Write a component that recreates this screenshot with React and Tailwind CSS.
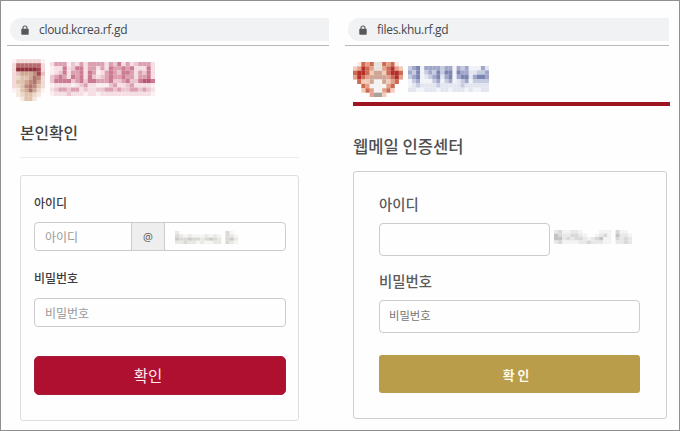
import React from "react";

const FONT = "font-['Noto_Sans_CJK_KR',sans-serif]";

const CREST = {
  colors: { a: "#fcf2f1", b: "#f3d9d9", c: "#e6bfc0", d: "#b96a6e", e: "#92303a", f: "#a34650", g: "#ecd8c9", h: "#dfc2ac", i: "#d0a891", j: "#c08a7a", k: "#b0736c", l: "#f6e8df" },
  rows: ["abbbbbba", "bddddddb", "beeeeefb", "bciiijfc", "bghhikjb", "bhhijkib", "bghjkjhb", "alhikiga", ".lghhgl.", "..lhhl.."],
};

const CREST_TEXT = {
  colors: { a: "#fbeff2", b: "#f5dfe5", c: "#ebc5cf", d: "#dca0b0", e: "#cb7b91", f: "#b85673" },
  rows: [
    "bdddacbdbddddbdcebdbcdddb",
    "abbebceebddbdbeddedebbbeb",
    "abcebddebedabdedceedbdceb",
    "cdedbedebecbcdeddeddbddeb",
    "ceeeecdeceedddeccdecceffe",
    "abbbbabcdbbaaacdbbcdbbbba",
    "bcddcddbcbbccddcdccddcdcb",
    "abbbcbbbabbabbbbbbbbbbbba",
  ],
};

const HEART = {
  colors: { a: "#fbe9e2", b: "#f3cbb9", c: "#e3a08a", d: "#cd6a52", e: "#b52e2b", f: "#cfa595", g: "#aaa19b", h: "#f5f3f1", i: "#e8e2de" },
  rows: [".adcdiidcda.", "bcedciicdecb", "deedbffbdeed", "cedcffffcdec", ".dbbfhhfbcd.", "..dchhhhcd..", "..bdchhcdb..", "....cggb...."],
};

const HEART_TEXT = {
  colors: { a: "#f2f3f8", b: "#e3e6f0", c: "#c6cbe0", d: "#a0a7ca", e: "#7b85b2" },
  rows: ["cdeaddddcddadcdaaadb", "dceacdceceeaeddbbccd", "cdeabcdebdeadeebdeed", "acdaaacdacdabcdacccc", "abcbbbbcbbbbbcbbbbbb", "bbaabbbabbabbbabaabb"],
};

const LEFT_DOMAIN = {
  colors: { a: "#f5f5f3", b: "#e9e8e5", c: "#dad9d5", d: "#cccbc7" },
  rows: ["b...........ca.", "cbabaaababa.cba", "dccdccbcdcb.cdb", "bbcbbabaabb.cba"],
};

const RIGHT_DOMAIN = {
  colors: { a: "#f3f3f3", b: "#e8e8e8", c: "#d8d8d8", d: "#c3c3c3" },
  rows: ["bcaabba....aaa.caa.", "dcbbccba..abca.dbba", "ddbcbccbabcdaa.cbcb", "bcaaaabbcbbbaa.bbcb"],
};

// Pixelated block that hides a logo or an address.
function Mosaic({ art, className }) {
  const cols = art.rows[0].length;
  return (
    <svg
      className={"block shrink-0 " + className}
      viewBox={`0 0 ${cols} ${art.rows.length}`}
      preserveAspectRatio="none"
      aria-hidden="true"
    >
      {art.rows.map((row, y) =>
        [...row].map((key, x) =>
          key === "." ? null : <rect key={`${x}-${y}`} x={x} y={y} width="1.02" height="1.02" fill={art.colors[key]} />
        )
      )}
    </svg>
  );
}

function AddressBar({ url, className }) {
  return (
    <div className={"flex h-[23px] items-center rounded-l-full bg-[#f1f2f3] " + className}>
      <svg viewBox="0 0 8 10" className="h-[10px] w-[8px]" aria-hidden="true">
        <path d="M2 5V3a2 2 0 0 1 4 0v2" fill="none" stroke="#55585c" strokeWidth="1.1" />
        <rect x="0.3" y="3.8" width="7.4" height="6" rx="0.8" fill="#55585c" />
      </svg>
      <span className="ml-[10px] font-['Open_Sans',sans-serif] text-[12px] leading-[20px] tracking-[-0.3px] text-[#45484c]">{url}</span>
    </div>
  );
}

function LeftPage() {
  return (
    <section className="flex w-[339px] flex-col pt-[17px]">
      <AddressBar url="cloud.kcrea.rf.gd" className="ml-[9px] w-[319px] pl-[11px]" />
      <div className="mt-[4px] ml-[6px] h-px w-[322px] bg-[#b4b7ba]" />
      <div className="mt-[13px] ml-[11px] flex h-[42px] items-start">
        <Mosaic art={CREST} className="h-[42px] w-[33px]" />
        <Mosaic art={CREST_TEXT} className="mt-[3px] ml-[5px] h-[34px] w-[105px]" />
      </div>
      <div className="ml-[19px] w-[279px]">
        <h1 className="mt-[20px] h-[24px] text-[15.8px] leading-[23px] font-medium text-[#444]">본인확인</h1>
        <div className="mt-[12px] h-px bg-[#ececec]" />
        <div className="mt-[17px] flex h-[246px] flex-col rounded-[3px] border border-[#dedede] px-[13px] pt-[17px]">
          <label className="h-[20px] text-[12px] leading-[20px] font-medium text-[#3c3c3c]">아이디</label>
          <div className="mt-[9px] flex h-[29px] w-[252px] overflow-hidden rounded-[4px] border border-[#ccc] text-[12px] leading-[27px]">
            <div className="w-[96px] pl-[10px] text-[#999]">아이디</div>
            <div className="w-[34px] border-x border-[#ccc] bg-[#eee] text-center font-['Open_Sans',sans-serif] text-[11px] text-[#555]">@</div>
            <div className="flex-1 pt-[8px] pl-[10px]">
              <Mosaic art={LEFT_DOMAIN} className="h-[13px] w-[63px]" />
            </div>
          </div>
          <label className="mt-[17px] h-[20px] text-[12px] leading-[20px] font-medium text-[#3c3c3c]">비밀번호</label>
          <div className="mt-[10px] h-[29px] w-[252px] rounded-[4px] border border-[#ccc] pl-[10px] text-[12px] leading-[27px] text-[#999]">비밀번호</div>
          <button className="mt-[29px] h-[39px] w-[252px] rounded-[5px] border border-[#a51b3c] bg-[#b01030] pr-[24px] text-center text-[15.5px] leading-[37px] text-[#fdebed]">확인</button>
        </div>
      </div>
    </section>
  );
}

function RightPage() {
  return (
    <section className="flex w-[339px] flex-col pt-[17px]">
      <AddressBar url="files.khu.rf.gd" className="ml-[8px] w-[321px] pl-[11px]" />
      <div className="mt-[4px] ml-[5px] h-px w-[324px] bg-[#b8b8b8]" />
      <div className="mt-[16px] ml-[13px] flex h-[35px] items-start">
        <Mosaic art={HEART} className="h-[35px] w-[50px]" />
        <Mosaic art={HEART_TEXT} className="mt-[4px] ml-[5px] h-[26px] w-[81px]" />
      </div>
      <div className="mt-[5px] ml-[13px] h-[4px] w-[317px] bg-[#9e1420]" />
      <div className="ml-[13px] w-[314px]">
        <h1 className="mt-[27px] h-[26px] text-[16.6px] leading-[26px] font-medium whitespace-nowrap text-[#505050]">웹메일 인증센터</h1>
        <div className="mt-[12px] flex h-[248px] flex-col rounded-[3px] border border-[#cfcfcf] pt-[22px] pl-[25px]">
          <label className="h-[22px] text-[14.4px] leading-[20px] font-medium text-[#5a5a5a]">아이디</label>
          <div className="mt-[7px] flex">
            <div className="h-[33px] w-[171px] rounded-[4px] border border-[#ccc]" />
            <Mosaic art={RIGHT_DOMAIN} className="mt-[7px] ml-[4px] h-[14px] w-[78px]" />
          </div>
          <label className="mt-[15px] h-[22px] text-[14.4px] leading-[20px] font-medium text-[#5a5a5a]">비밀번호</label>
          <div className="mt-[7px] h-[33px] w-[261px] rounded-[4px] border border-[#ccc] pl-[9px] text-[11.3px] leading-[29px] text-[#777]">비밀번호</div>
          <button className="mt-[22px] h-[38px] w-[261px] rounded-[3px] bg-[#b99d4b] pl-[13px] text-center text-[12.8px] leading-[37px] font-bold text-[#fffbea]">확 인</button>
        </div>
      </div>
    </section>
  );
}

export default function App() {
  return (
    <main className={"flex h-[431px] w-[680px] overflow-hidden border border-[#8f8f8f] bg-[#fefefe] " + FONT}>
      <LeftPage />
      <RightPage />
    </main>
  );
}
